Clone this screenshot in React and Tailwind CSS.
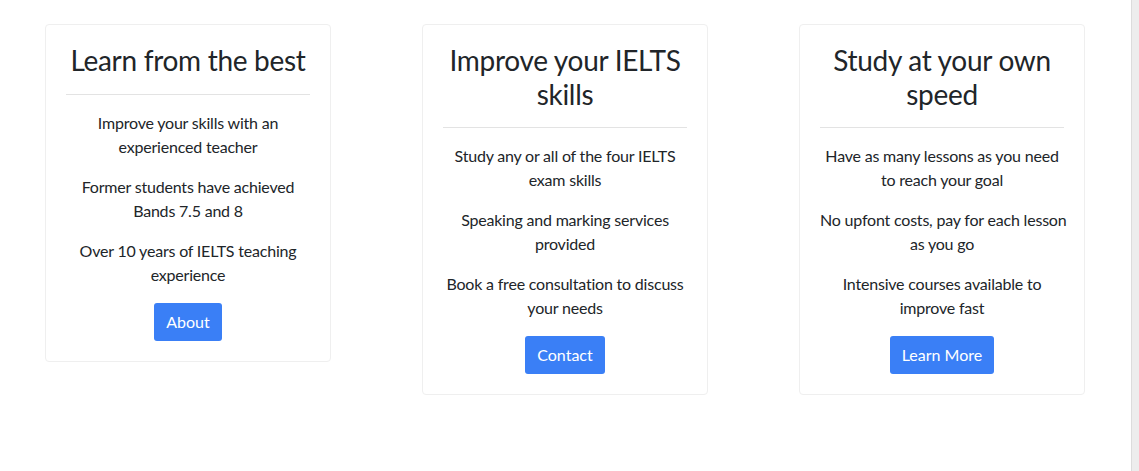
const cards = [
  {
    title: 'Learn from the best',
    points: [
      ['Improve your skills with an', 'experienced teacher'],
      ['Former students have achieved', 'Bands 7.5 and 8'],
      ['Over 10 years of IELTS teaching', 'experience'],
    ],
    button: 'About',
  },
  {
    title: 'Improve your IELTS skills',
    points: [
      ['Study any or all of the four IELTS', 'exam skills'],
      ['Speaking and marking services', 'provided'],
      ['Book a free consultation to discuss', 'your needs'],
    ],
    button: 'Contact',
  },
  {
    title: 'Study at your own speed',
    points: [
      ['Have as many lessons as you need', 'to reach your goal'],
      ['No upfont costs, pay for each lesson', 'as you go'],
      ['Intensive courses available to', 'improve fast'],
    ],
    button: 'Learn More',
  },
];

const FeatureCard = ({ card }) => (
  <div className="w-[286px] shrink-0 self-start bg-white border border-[#efefef] rounded-[4px] p-5 text-center text-[#212529]">
    <h3 className="text-[28px] leading-[1.2] font-normal tracking-[-0.3px] -mt-px">{card.title}</h3>
    <hr className="my-4 border-t border-[#e3e3e3]" />
    {card.points.map(([first, second]) => (
      <p key={first} className="text-base leading-6 mb-4 tracking-[-0.2px]">
        <span className="whitespace-nowrap">{first}</span>
        <br />
        {second}
      </p>
    ))}
    <button className="bg-[#3a7ff6] text-white text-base leading-6 px-3 py-[7px] rounded-[3px]">
      {card.button}
    </button>
  </div>
);

export default function App() {
  return (
    <div
      className="flex h-[471px] bg-white"
      style={{ fontFamily: 'Lato, "Open Sans", sans-serif' }}
    >
      <main className="flex-1 pt-6 pl-[45px]">
        <div className="flex items-start gap-[91px]">
          {cards.map((card) => (
            <FeatureCard key={card.title} card={card} />
          ))}
        </div>
      </main>
      <div className="w-2 bg-[#ededed] border-l border-[#dcdcdc]" />
    </div>
  );
}
